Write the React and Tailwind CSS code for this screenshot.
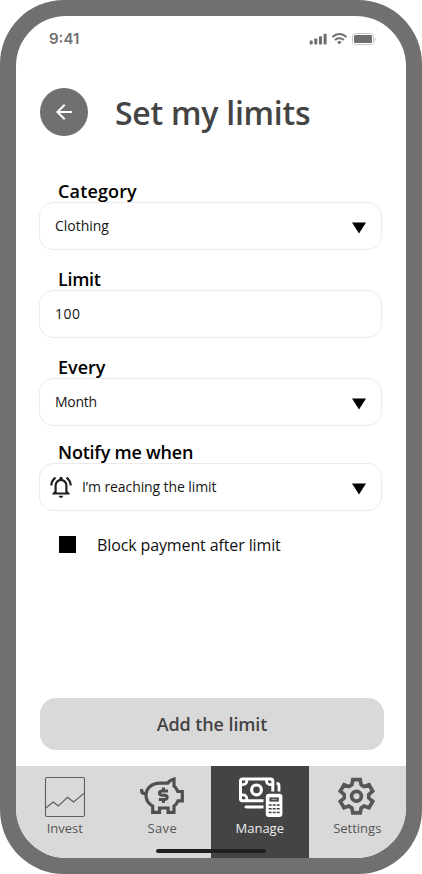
import React from "react";
import { MdArrowBack, MdOutlineNotificationsActive } from "react-icons/md";

function StatusBar() {
  return (
    <div className="flex h-[45px] items-center justify-between pl-[33px] pr-[30px] text-[#6f6d6e]">
      <span className="font-['Inter',sans-serif] text-[15px] font-semibold leading-none">9:41</span>
      <svg width="68" height="14" viewBox="0 0 68 14" fill="currentColor">
        <rect x="1.7" y="8.6" width="3" height="3.9" rx="0.8" />
        <rect x="6.3" y="6.5" width="3" height="6" rx="0.8" />
        <rect x="11" y="4.2" width="3" height="8.3" rx="0.8" />
        <rect x="15.6" y="1.7" width="3" height="10.8" rx="0.8" />
        <g fill="none" stroke="currentColor" strokeWidth="2">
          <path d="M24.4 4.9a10.2 10.2 0 0 1 14 0" />
          <path d="M27 7.9a6.4 6.4 0 0 1 8.8 0" />
        </g>
        <path d="M29.2 10.1a3.2 3.2 0 0 1 4.400 0l-2.200 2.300z" />
        <rect x="44.500" y="1.600" width="21" height="11" rx="2.800" fill="none" stroke="#c8c7c7" />
        <rect x="46" y="3.100" width="18" height="8" rx="1.400" />
        <path d="M66.800 5.300v3.800c1.400-.7 1.400-3.100 0-3.800z" fill="#c8c7c7" />
      </svg>
    </div>
  );
}

function Field({ label, value, labelClass, valueClass, bell, select }) {
  return (
    <div className="flex flex-col">
      <div className={"h-[24px] whitespace-nowrap pl-[19px] text-[18px] font-semibold leading-[27px] text-black " + labelClass}>{label}</div>
      <div className="flex h-[48px] items-center rounded-[14px] border border-[#ebebeb] bg-white px-[15px]">
        {bell && <MdOutlineNotificationsActive className="-ml-[7px] mr-[8px] size-[26px] shrink-0 text-[#1f1f1f]" />}
        <span className={"grow whitespace-nowrap pb-px text-[14px] text-[#161616] " + valueClass}>{value}</span>
        {select && (
          <svg className="mt-[3px]" width="14" height="12" viewBox="0 0 14 12">
            <path d="M0 0.400h14L7 11.600z" fill="#000" />
          </svg>
        )}
      </div>
    </div>
  );
}

function InvestIcon() {
  return (
    <svg width="44" height="44" viewBox="0 0 44 44" fill="none" stroke="#5f5f5f">
      <rect x="2.500" y="3.500" width="39" height="39" rx="1.500" strokeWidth="1.100" />
      <path d="M2.700 34l7.600-6 5 4 9.300-8.600 6 4.500 11-9" strokeWidth="1.200" />
    </svg>
  );
}

function SaveIcon() {
  return (
    <svg width="44" height="44" viewBox="0 0 44 44" fill="none" stroke="#4f4f4f" strokeWidth="3.200">
      <path d="M1.600 15v1.600c0 2 1.400 3.300 4.400 3.300" />
      <path d="M6 21.500C6 14 12 9.200 20 9.200h7.600c1.600-2.200 3.600-3.600 6.400-4.200v7c1.900 1.400 3.100 3.300 3.800 5.500h4.500v9.300h-4.300c-.8 2.400-2.200 4-4 5.200v6.300h-5.900V34h-8.600v4.300h-6.800v-6.200C8.400 29.700 6 26 6 21.500z" />
      <path d="M28 17h-5.600c-4 0-4 4.200 0 4.200h1.800c4 0 4 4.200 0 4.200h-5.400M23.400 13.500V17M23.400 25.400v3.600" strokeWidth="3" />
    </svg>
  );
}

function ManageIcon() {
  return (
    <svg width="46" height="44" viewBox="-0.500 -1 46 44" fill="none" stroke="#fff" strokeWidth="3">
      <path d="M35.300 16.500V6a2 2 0 0 0-2-2H5a2 2 0 0 0-2 2v17.800a2 2 0 0 0 2 2h21" />
      <path d="M9.300 4v2a3.700 3.700 0 0 1-3.700 3.700H3M29 4v2a3.700 3.700 0 0 0 3.700 3.700h2.600M9.300 25.500v-2a3.700 3.700 0 0 0-3.700-3.700H3" strokeWidth="2.800" />
      <circle cx="19" cy="14.900" r="4.900" strokeWidth="3.200" />
      <path d="M39 8.500c1.800 0 2.500.8 2.500 2v6M7.500 31.200c.5.500 1.300.8 2.500.8h16" strokeWidth="2.800" />
      <rect x="28.300" y="18.700" width="16.600" height="23.200" rx="3" fill="#fff" stroke="none" />
      <g fill="#444" stroke="none">
        <rect x="32" y="22.400" width="9.300" height="4.200" />
        <rect x="34" y="23.800" width="5.300" height="1.300" fill="#999" />
        <rect x="31.200" y="29.300" width="3" height="1.500" />
        <rect x="35.200" y="29.300" width="3" height="1.500" />
        <rect x="39.200" y="29.300" width="3" height="1.500" />
        <rect x="31.200" y="33" width="3" height="1.500" />
        <rect x="35.200" y="33" width="3" height="1.500" />
        <rect x="39.200" y="33" width="3" height="1.500" />
        <rect x="31.200" y="36.700" width="3" height="1.500" />
        <rect x="35.200" y="36.700" width="3" height="1.500" />
        <rect x="39.200" y="36.700" width="3" height="1.500" />
      </g>
    </svg>
  );
}

function SettingsIcon() {
  return (
    <svg width="44" height="44" viewBox="-21.500 -22.300 44 44" fill="none" stroke="#575757" strokeWidth="3.700">
      <path d="M-4.700-11.500L-3.700-16.600H3.700L4.700-11.500 7.600-9.800 12.500-11.500 16.200-5.100 12.300-1.700V1.700L16.200 5.100 12.500 11.500 7.600 9.800 4.700 11.500 3.700 16.600H-3.700L-4.700 11.500-7.600 9.800-12.500 11.500-16.200 5.100-12.300 1.700V-1.700L-16.200-5.100-12.500-11.500-7.600-9.800z" />
      <circle r="4.900" />
    </svg>
  );
}

function Tab({ icon, label, className }) {
  return (
    <div className={"flex flex-1 flex-col items-center pt-[8px] " + className}>
      {icon}
      <span className="whitespace-nowrap text-[13px] leading-[20px]">{label}</span>
    </div>
  );
}

export default function App() {
  return (
    <div className="h-[874px] w-[422px] bg-white font-['Open_Sans','Noto_Sans',sans-serif]">
      <div className="h-full w-full rounded-[64px] bg-[#716f70] p-[16px]">
        <div className="relative flex h-full flex-col overflow-hidden rounded-[50px] bg-white">
          <StatusBar />
          <header className="mt-[27px] flex h-[48px] items-center pl-[24px]">
            <button className="flex size-[48px] items-center justify-center rounded-full bg-[#716f70] text-white">
              <MdArrowBack className="size-[24px]" />
            </button>
            <h1 className="ml-[27px] whitespace-nowrap pt-[2px] text-[32px] font-semibold leading-[48px] tracking-[-0.25px] text-[#444]">Set my limits</h1>
          </header>
          <main className="flex grow flex-col pl-[23px] pr-[24px] pt-[42px]">
            <div className="flex flex-col gap-[16px]">
              <Field label="Category" value="Clothing" select labelClass="tracking-[0.15px]" valueClass="tracking-[-0.02px]" />
              <Field label="Limit" value="100" labelClass="tracking-[-0.3px]" valueClass="tracking-[0.5px]" />
              <Field label="Every" value="Month" select labelClass="" valueClass="tracking-[-0.3px]" />
              <div className="-mt-[3px]">
                <Field label="Notify me when" value="I’m reaching the limit" bell select labelClass="tracking-[-0.22px]" valueClass="tracking-[-0.1px]" />
              </div>
            </div>
            <label className="mt-[22px] flex h-[23px] items-center pl-[20px]">
              <span className="size-[17px] bg-black" />
              <span className="ml-[21px] whitespace-nowrap pt-px text-[16px] tracking-[-0.12px] text-[#111]">Block payment after limit</span>
            </label>
          </main>
          <button className="mb-[16px] ml-[24px] h-[52px] w-[344px] shrink-0 rounded-[16px] bg-[#d9d9d9] pt-px text-[18px] font-semibold tracking-[-0.1px] text-[#444]">Add the limit</button>
          <nav className="flex h-[92px] shrink-0 bg-[#d9d9d9] text-[#555]">
            <Tab icon={<InvestIcon />} label="Invest" className="" />
            <Tab icon={<SaveIcon />} label="Save" className="tracking-[0.4px]" />
            <Tab icon={<ManageIcon />} label="Manage" className="bg-[#444] text-[#eee]" />
            <Tab icon={<SettingsIcon />} label="Settings" className="" />
          </nav>
          <div className="absolute bottom-[5.5px] left-[140px] h-[4px] w-[110px] rounded-full bg-[#202020]" />
        </div>
      </div>
    </div>
  );
}
